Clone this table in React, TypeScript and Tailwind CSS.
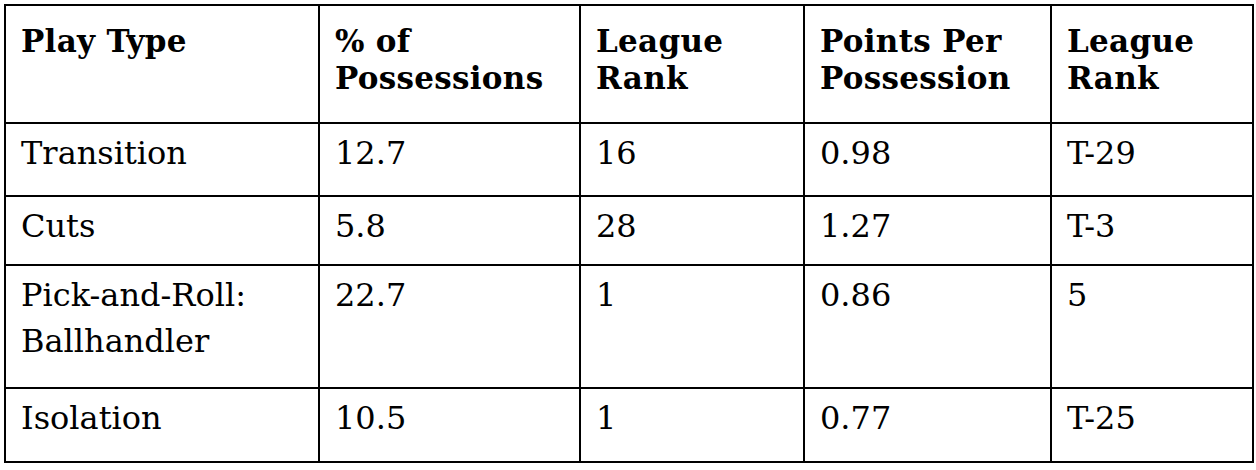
const headers = [
  ['Play Type'],
  ['% of', 'Possessions'],
  ['League', 'Rank'],
  ['Points Per', 'Possession'],
  ['League', 'Rank'],
];

const rows: { cells: string[][]; height: string }[] = [
  { cells: [['Transition'], ['12.7'], ['16'], ['0.98'], ['T-29']], height: 'h-[73px]' },
  { cells: [['Cuts'], ['5.8'], ['28'], ['1.27'], ['T-3']], height: 'h-[69px]' },
  { cells: [['Pick-and-Roll:', 'Ballhandler'], ['22.7'], ['1'], ['0.86'], ['5']], height: 'h-[123px]' },
  { cells: [['Isolation'], ['10.5'], ['1'], ['0.77'], ['T-25']], height: 'h-[74px]' },
];

export default function App() {
  return (
    <div className="w-[1256px] h-[470px] bg-white p-[4px] font-['DejaVu_Serif',Georgia,serif] text-black">
      <table className="table-fixed border-collapse border-2 border-black w-[1248px]">
        <colgroup>
          <col className="w-[314px]" />
          <col className="w-[261px]" />
          <col className="w-[224px]" />
          <col className="w-[247px]" />
          <col className="w-[202px]" />
        </colgroup>
        <thead>
          <tr className="h-[118px]">
            {headers.map((lines, i) => (
              <th
                key={i}
                className="border-2 border-black align-top text-left px-[15px] pt-[17px] text-[31px] leading-[37px] font-bold tracking-[0.3px]"
              >
                {lines.map((l, j) => (
                  <div key={j} className="whitespace-nowrap">{l}</div>
                ))}
              </th>
            ))}
          </tr>
        </thead>
        <tbody>
          {rows.map((row, r) => (
            <tr key={r} className={row.height}>
              {row.cells.map((lines, i) => (
                <td
                  key={i}
                  className="border-2 border-black align-top px-[15px] pt-[6px] text-[32px] leading-[46px]"
                >
                  {lines.map((l, j) => (
                    <div key={j} className="whitespace-nowrap">{l}</div>
                  ))}
                </td>
              ))}
            </tr>
          ))}
        </tbody>
      </table>
    </div>
  );
}
